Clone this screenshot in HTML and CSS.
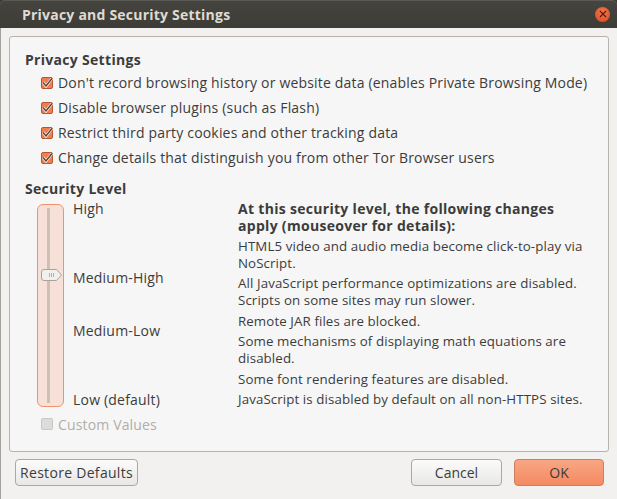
FILE: index.html
```html
<!DOCTYPE html>
<html lang="en">
<head>
<meta charset="utf-8">
<title>Privacy and Security Settings</title>
<link rel="stylesheet" href="styles.css">
</head>
<body>
<div class="window">
  <header class="titlebar">
    <h1 class="title">Privacy and Security Settings</h1>
    <span class="close"><svg viewBox="0 0 8 8" width="8" height="8"><path d="M1 1l6 6M7 1L1 7" stroke="#4a1d0c" stroke-width="1.1" fill="none"/></svg></span>
  </header>
  <main class="content">
    <section class="panel">
      <h2 class="heading">Privacy Settings</h2>
      <ul class="checks">
        <li class="check-row"><span class="box"><svg viewBox="0 0 14 14" width="14" height="14"><path d="M3 6.5l3 3.5L12 2.5" stroke="#fdf3ec" stroke-width="2.8" fill="none"/><path d="M3 6.5l3 3.5L12 2.5" stroke="#54423a" stroke-width="1.4" fill="none"/></svg></span>Don't record browsing history or website data (enables Private Browsing Mode)</li>
        <li class="check-row"><span class="box"><svg viewBox="0 0 14 14" width="14" height="14"><path d="M3 6.5l3 3.5L12 2.5" stroke="#fdf3ec" stroke-width="2.8" fill="none"/><path d="M3 6.5l3 3.5L12 2.5" stroke="#54423a" stroke-width="1.4" fill="none"/></svg></span>Disable browser plugins (such as Flash)</li>
        <li class="check-row"><span class="box"><svg viewBox="0 0 14 14" width="14" height="14"><path d="M3 6.5l3 3.5L12 2.5" stroke="#fdf3ec" stroke-width="2.8" fill="none"/><path d="M3 6.5l3 3.5L12 2.5" stroke="#54423a" stroke-width="1.4" fill="none"/></svg></span>Restrict third party cookies and other tracking data</li>
        <li class="check-row"><span class="box"><svg viewBox="0 0 14 14" width="14" height="14"><path d="M3 6.5l3 3.5L12 2.5" stroke="#fdf3ec" stroke-width="2.8" fill="none"/><path d="M3 6.5l3 3.5L12 2.5" stroke="#54423a" stroke-width="1.4" fill="none"/></svg></span>Change details that distinguish you from other Tor Browser users</li>
      </ul>
      <h2 class="heading heading-security">Security Level</h2>
      <div class="security">
        <div class="slider">
          <div class="track"></div>
          <div class="thumb">
            <svg viewBox="0 0 21 12" width="21" height="12"><path d="M3 .5h12.5l5 5.5-5 5.5H3A2.5 2.5 0 0 1 .5 9V3A2.5 2.5 0 0 1 3 .5z" fill="#f2f0ec" stroke="#a8a29a"/><path d="M8.5 4v4M10.5 4v4M12.5 4v4" stroke="#b5b0a8"/></svg>
          </div>
        </div>
        <div class="levels">
          <span class="level">High</span>
          <span class="level">Medium-High</span>
          <span class="level">Medium-Low</span>
          <span class="level">Low (default)</span>
        </div>
        <div class="details">
          <p class="details-title">At this security level, the following changes apply (mouseover for details):</p>
          <p class="detail">HTML5 video and audio media become click-to-play via NoScript.</p>
          <p class="detail">All JavaScript performance optimizations are disabled. Scripts on some sites may run slower.</p>
          <p class="detail">Remote JAR files are blocked.</p>
          <p class="detail">Some mechanisms of displaying math equations are disabled.</p>
          <p class="detail">Some font rendering features are disabled.</p>
          <p class="detail">JavaScript is disabled by default on all non-HTTPS sites.</p>
        </div>
      </div>
      <div class="custom"><span class="box box-off"></span>Custom Values</div>
    </section>
    <footer class="actions">
      <button class="btn btn-restore">Restore Defaults</button>
      <div class="actions-right">
        <button class="btn btn-cancel">Cancel</button>
        <button class="btn btn-ok">OK</button>
      </div>
    </footer>
  </main>
</div>
</body>
</html>
```
FILE: styles.css
```css
* { box-sizing: border-box; }
html, body { margin: 0; padding: 0; }
body {
  width: 617px;
  height: 499px;
  overflow: hidden;
  background: #3c3b37;
  font-family: "Open Sans", "Noto Sans", sans-serif;
  font-size: 14px;
  color: #3c3c3c;
}
.window { width: 617px; height: 499px; display: flex; flex-direction: column; }
.titlebar {
  height: 28px;
  flex: none;
  display: flex;
  align-items: center;
  justify-content: space-between;
  padding: 0 7px 0 22px;
  background: linear-gradient(#45443f, #3d3c37);
  border-radius: 5px 5px 0 0;
  box-shadow: inset 0 1px 0 #5a5953;
}
.title {
  margin: 0;
  font-size: 14px;
  font-weight: 700;
  letter-spacing: .22px;
  color: #dfdbd2;
}
.close {
  width: 15px;
  height: 15px;
  border-radius: 50%;
  display: flex;
  align-items: center;
  justify-content: center;
  background: radial-gradient(circle at 50% 35%, #f4754a, #d9471f);
}
.content {
  flex: 1;
  background: #f2f1f0;
  border-left: 1px solid #a3a19c;
  padding: 8px 8px 0 8px;
  display: flex;
  flex-direction: column;
}
.panel {
  height: 416px;
  background: #f6f6f6;
  border: 1px solid #b6b3ad;
  border-radius: 3px;
  padding: 14px 0 0 15px;
  display: flex;
  flex-direction: column;
}
.heading {
  margin: 0;
  font-size: 14px;
  line-height: 18px;
  font-weight: 700;
  letter-spacing: .3px;
  color: #3c3c3c;
}
.checks { list-style: none; margin: 1px 0 0; padding: 0; }
.check-row {
  height: 25px;
  display: flex;
  align-items: center;
  padding-left: 16px;
  white-space: nowrap;
  font-size: 14px;
  letter-spacing: .18px;
}
.box {
  width: 12px;
  height: 12px;
  flex: none;
  margin-right: 5px;
  border: 1px solid #b8562f;
  border-radius: 2px;
  background: #ef7f52;
  display: flex;
  align-items: center;
  justify-content: center;
}
.box svg { flex: none; }
.box-off { background: #dcdcda; border-color: #c8c8c6; }
.heading-security { margin-top: 10px; }
.security { display: flex; margin-top: 6px; height: 208px; }
.slider {
  position: relative;
  width: 27px;
  margin-left: 12px;
  height: 203px;
  flex: none;
  background: #f7e0d8;
  border: 1px solid #f0926c;
  border-radius: 6px;
  display: flex;
  justify-content: center;
}
.track { width: 3px; height: 195px; margin: 3px 4px 0 0; background: #cfc0b6; }
.thumb { position: absolute; left: 3px; top: 64px; line-height: 0; }
.levels {
  width: 165px;
  margin-left: 9px;
  height: 203px;
  display: flex;
  flex-direction: column;
  align-items: flex-start;
}
.level { line-height: 18px; font-size: 14px; letter-spacing: .2px; white-space: nowrap; }
.level:nth-child(1) { margin-top: -4px; }
.level:nth-child(2) { margin-top: 51px; }
.level:nth-child(3) { margin-top: 35px; }
.level:nth-child(4) { margin-top: 51px; }
.details { width: 352px; margin-top: -4px; font-size: 13.3px; line-height: 17px; letter-spacing: .1px; }
.details-title { margin: 0 0 3.5px; font-weight: 700; font-size: 14px; letter-spacing: .3px; }
.detail { margin: 0 0 3.5px; }
.custom {
  display: flex;
  align-items: center;
  margin: 3px 0 0 16px;
  height: 18px;
  color: #b0aeaa;
  font-size: 14px;
  letter-spacing: .15px;
}
.actions {
  height: 27px;
  margin-top: 7px;
  padding: 0 5px 0 6px;
  display: flex;
  justify-content: space-between;
}
.actions-right { display: flex; gap: 12px; }
.btn {
  height: 27px;
  padding: 0;
  border: 1px solid #aaa8a3;
  border-radius: 4px;
  background: linear-gradient(#fbfbfb, #e8e7e5);
  color: #3c3c3c;
  font-family: inherit;
  font-size: 14px;
}
.btn-restore { width: 123px; letter-spacing: .3px; }
.btn-cancel { width: 91px; }
.btn-ok {
  width: 90px;
  background: linear-gradient(#f9a684, #f48a62);
  border-color: #c9805f;
}
```
